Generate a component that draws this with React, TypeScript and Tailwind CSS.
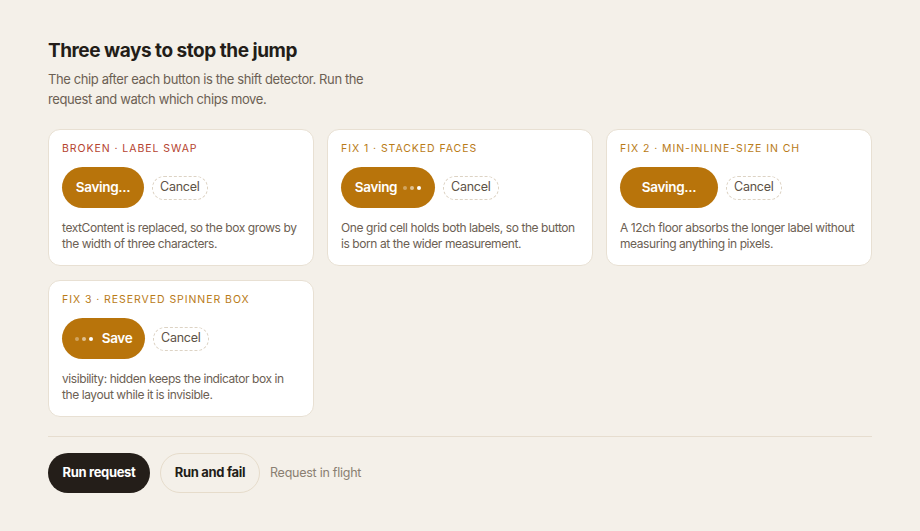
import type { ReactNode } from 'react';

type Demo = {
  tag: string;
  tone: 'broken' | 'fix';
  button: ReactNode;
  buttonClass: string;
  note: string;
};

function Dots() {
  return (
    <span className="inline-flex items-center gap-[3px]">
      <span className="h-[4px] w-[4px] rounded-full bg-white/35" />
      <span className="h-[4px] w-[4px] rounded-full bg-white/55" />
      <span className="h-[4px] w-[4px] rounded-full bg-white" />
    </span>
  );
}

const DEMOS: Demo[] = [
  {
    tag: 'Broken · label swap',
    tone: 'broken',
    button: <span>Saving...</span>,
    buttonClass: 'w-[82px] justify-center',
    note: 'textContent is replaced, so the box grows by the width of three characters.',
  },
  {
    tag: 'Fix 1 · stacked faces',
    tone: 'fix',
    button: (
      <span className="flex items-center gap-[6px]">
        Saving <Dots />
      </span>
    ),
    buttonClass: 'w-[94px] justify-center',
    note: 'One grid cell holds both labels, so the button is born at the wider measurement.',
  },
  {
    tag: 'Fix 2 · min-inline-size in ch',
    tone: 'fix',
    button: <span>Saving...</span>,
    buttonClass: 'w-[98px] justify-center',
    note: 'A 12ch floor absorbs the longer label without measuring anything in pixels.',
  },
  {
    tag: 'Fix 3 · reserved spinner box',
    tone: 'fix',
    button: (
      <span className="flex items-center gap-[9px]">
        <Dots /> Save
      </span>
    ),
    buttonClass: 'w-[83px] justify-center',
    note: 'visibility: hidden keeps the indicator box in the layout while it is invisible.',
  },
];

function DemoCard({ demo }: { demo: Demo }) {
  return (
    <div className="rounded-[12px] border border-[#e8e0d3] bg-white px-[13px] pt-[11px] pb-[13px]">
      <div
        className={`text-[10.5px] uppercase leading-4 tracking-[0.09em] ${
          demo.tone === 'broken' ? 'text-[#b5432f]' : 'text-[#b97b17]'
        }`}
      >
        {demo.tag}
      </div>
      <div className="mt-[10px] flex items-center gap-2">
        <button
          type="button"
          className={`flex h-[41px] items-center rounded-full bg-[#b8740b] text-[13.5px] font-semibold tracking-[-0.025em] text-white ${demo.buttonClass}`}
        >
          {demo.button}
        </button>
        <span className="flex h-[24px] items-center rounded-full border border-dashed border-[#ddd3c4] px-[7px] text-[12.5px] tracking-[-0.02em] text-[#5d5247]">
          Cancel
        </span>
      </div>
      <p className="mt-[12px] text-[12px] leading-4 tracking-[-0.035em] text-[#6c6053]">{demo.note}</p>
    </div>
  );
}

export default function App() {
  return (
    <div
      className="min-h-screen bg-[#f4f0e9] px-[48px] pt-[37px] pb-10 text-[#231d18]"
      style={{ fontFamily: 'Inter, "Noto Sans", sans-serif' }}
    >
      <h1 className="text-[19px] font-bold leading-7 tracking-[-0.025em]">Three ways to stop the jump</h1>
      <p className="mt-[4px] max-w-[356px] text-[13px] leading-5 tracking-[-0.03em] text-[#6c6053]">
        The chip after each button is the shift detector. Run the request and watch which chips move.
      </p>

      <div className="mt-[20px] grid w-[824px] grid-cols-3 gap-x-[13px] gap-y-[14px]">
        {DEMOS.map((d) => (
          <DemoCard key={d.tag} demo={d} />
        ))}
      </div>

      <div className="mt-[19px] flex w-[824px] items-center gap-[10px] border-t border-[#e6ddcf] pt-[16px]">
        <button
          type="button"
          className="h-[40px] w-[102px] rounded-full bg-[#241e19] text-[13px] font-bold tracking-[-0.025em] text-white"
        >
          Run request
        </button>
        <button
          type="button"
          className="h-[40px] w-[100px] rounded-full border border-[#e6dccb] text-[13px] font-bold tracking-[-0.025em] text-[#231d18]"
        >
          Run and fail
        </button>
        <span className="text-[12.5px] tracking-[-0.02em] text-[#8a7f72]">Request in flight</span>
      </div>
    </div>
  );
}
